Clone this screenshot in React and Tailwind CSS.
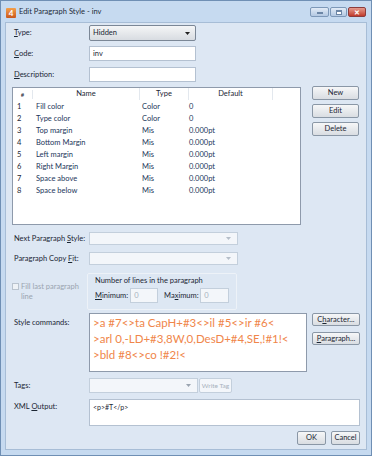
import React from 'react';

const font = { fontFamily: 'Lato, Roboto, "Open Sans", sans-serif' };

const rows = [
  ['1', 'Fill color', 'Color', '0'],
  ['2', 'Type color', 'Color', '0'],
  ['3', 'Top margin', 'Mis', '0.000pt'],
  ['4', 'Bottom Margin', 'Mis', '0.000pt'],
  ['5', 'Left margin', 'Mis', '0.000pt'],
  ['6', 'Right Margin', 'Mis', '0.000pt'],
  ['7', 'Space above', 'Mis', '0.000pt'],
  ['8', 'Space below', 'Mis', '0.000pt'],
];

const Btn = ({ children, className = '' }) => (
  <div
    className={`flex items-center justify-center whitespace-nowrap rounded-[2px] border border-[#8a97a6] bg-gradient-to-b from-[#f6f7f8] to-[#d9dde2] text-[7.5px] text-[#1b2633] ${className}`}
  >
    {children}
  </div>
);

const Arrow = ({ color = '#222' }) => (
  <svg width="5" height="3" viewBox="0 0 5 3">
    <path d="M0 0h5L2.5 3z" fill={color} />
  </svg>
);

const Label = ({ children, className = '' }) => (
  <div className={`w-[75px] shrink-0 whitespace-nowrap text-[7.5px] text-[#1b2633] ${className}`}>{children}</div>
);

export default function App() {
  return (
    <div className="w-[372px] h-[456px] bg-[#c6daf0] border border-[#6f8fb4] flex flex-col" style={font}>
      {/* title bar */}
      <div className="h-[21px] flex items-center px-[5px] shrink-0">
        <div className="w-[10px] h-[10px] bg-gradient-to-b from-[#f3a04b] to-[#c9561b] rounded-[1px] flex items-center justify-center text-[8px] font-bold text-white leading-none mt-[2px]">
          4
        </div>
        <div className="ml-[3px] whitespace-nowrap text-[7.5px] text-[#1d2a38] mt-[1px]">Edit Paragraph Style - inv</div>
        <div className="ml-auto flex self-start mt-[6px] gap-[1px]">
          <div className="w-[19px] h-[10px] rounded-[2px] border border-[#7d98b8] bg-gradient-to-b from-[#e2ebf6] to-[#b3c8e2] flex items-end justify-center pb-[2px]">
            <div className="w-[6px] h-[2px] bg-white border border-[#6c86a6]"></div>
          </div>
          <div className="w-[17px] h-[10px] rounded-[2px] border border-[#7d98b8] bg-gradient-to-b from-[#e2ebf6] to-[#b3c8e2] flex items-center justify-center">
            <div className="w-[6px] h-[5px] border border-[#6c86a6] border-t-2 bg-white"></div>
          </div>
          <div className="w-[18px] h-[10px] rounded-[2px] border border-[#8c3c3c] bg-gradient-to-b from-[#e49a8e] to-[#c0392b] flex items-center justify-center text-white text-[7px] font-bold leading-none">
            ✕
          </div>
        </div>
      </div>

      {/* content */}
      <div className="mx-[4px] mb-[5px] flex-1 bg-[#dde7f3] flex flex-col pl-[8px] pr-[6px] pt-[2px] border border-[#a7bdd6]">
        {/* Type */}
        <div className="flex items-center h-[16px]">
          <Label><u>T</u>ype:</Label>
          <div className="w-[107px] h-[16px] rounded-[2px] border border-[#7b8796] bg-gradient-to-b from-[#f5f6f7] to-[#d8dce1] flex items-center pl-[3px] pr-[5px] text-[7.5px] text-[#1b2633]">
            Hidden
            <div className="ml-auto"><Arrow /></div>
          </div>
        </div>
        {/* Code */}
        <div className="flex items-center h-[15px] mt-[5px]">
          <Label><u>C</u>ode:</Label>
          <div className="w-[107px] h-[15px] border border-[#b4c1d1] bg-white flex items-center pl-[3px] text-[7.5px] text-[#1b2633]">inv</div>
        </div>
        {/* Description */}
        <div className="flex items-center h-[15px] mt-[6px]">
          <Label><u>D</u>escription:</Label>
          <div className="w-[107px] h-[15px] border border-[#b4c1d1] bg-white"></div>
        </div>

        {/* table + buttons */}
        <div className="flex mt-[4px]">
          <div className="ml-[-2px] mt-[1px] w-[289px] h-[138px] border border-[#8e9aab] bg-white text-[7.5px] text-[#22365a]">
            <div className="flex h-[12px] items-center text-[#1b2633]">
              <div className="w-[20px] text-center border-r border-[#e3e8ee] text-[6px]">#</div>
              <div className="w-[107px] text-center border-r border-[#e3e8ee]">Name</div>
              <div className="w-[49px] text-center border-r border-[#e3e8ee]">Type</div>
              <div className="w-[84px] text-center border-r border-[#e3e8ee]">Default</div>
            </div>
            <div className="mt-[1px]">
              {rows.map((r) => (
                <div key={r[0]} className="flex h-[12px] items-center whitespace-nowrap">
                  <div className="w-[20px] pl-[4px] text-[#1b2633]">{r[0]}</div>
                  <div className="w-[107px] pl-[3px]">{r[1]}</div>
                  <div className="w-[49px] pl-[2px]">{r[2]}</div>
                  <div className="w-[84px]">{r[3]}</div>
                </div>
              ))}
            </div>
          </div>
          <div className="ml-[11px] flex flex-col gap-[4px]">
            <Btn className="w-[47px] h-[14px]">New</Btn>
            <Btn className="w-[47px] h-[14px]">Edit</Btn>
            <Btn className="w-[47px] h-[14px]">Delete</Btn>
          </div>
        </div>

        {/* Next paragraph style */}
        <div className="flex items-center h-[13px] mt-[7px]">
          <Label>Next Paragraph <u>S</u>tyle:</Label>
          <div className="w-[149px] h-[13px] border border-[#c3cfdc] bg-[#f3f6fa] flex items-center justify-end pr-[6px]">
            <Arrow color="#b5bec9" />
          </div>
        </div>
        <div className="flex items-center h-[13px] mt-[7px]">
          <Label>Paragraph Copy <u>F</u>it:</Label>
          <div className="w-[149px] h-[13px] border border-[#c3cfdc] bg-[#f3f6fa] flex items-center justify-end pr-[6px]">
            <Arrow color="#b5bec9" />
          </div>
        </div>

        {/* group */}
        <div className="flex mt-[8px] h-[37px]">
          <div className="w-[75px] flex text-[7.5px] text-[#9aa4b0] pt-[9px] ml-[-2px]">
            <div className="w-[7px] h-[7px] border border-[#b9c3ce] bg-[#eef2f6] mt-[1px] shrink-0"></div>
            <div className="ml-[2px] leading-[10px] whitespace-nowrap">Fill last paragraph<br />line</div>
          </div>
          <div className="w-[150px] border border-[#edf2f8] rounded-[2px] px-[7px] text-[7.5px] text-[#1b2633] whitespace-nowrap">
            <div className="mt-[1px]">Number of lines in the paragraph</div>
            <div className="flex items-center mt-[2px]">
              <div className="w-[37px]"><u>M</u>inimum:</div>
              <div className="w-[29px] h-[15px] border border-[#c3cfdc] bg-[#f3f6fa] text-[#a7b1bc] pl-[3px] flex items-center">0</div>
              <div className="ml-[6px] w-[38px]">Ma<u>x</u>imum:</div>
              <div className="w-[30px] h-[15px] border border-[#c3cfdc] bg-[#f3f6fa] text-[#a7b1bc] pl-[3px] flex items-center">0</div>
            </div>
          </div>
        </div>

        {/* style commands */}
        <div className="flex mt-[3px]">
          <Label className="pt-[4px]">Style commands:</Label>
          <div className="w-[219px] h-[59px] border border-[#8e9aab] bg-white px-[3px] pt-[1px] text-[11.5px] leading-[16px] text-[#f0864a] whitespace-nowrap">
            &gt;a #7&lt;&gt;ta CapH+#3&lt;&gt;il #5&lt;&gt;ir #6&lt;
            <br />
            &gt;arl 0,-LD+#3,8W,0,DesD+#4,SE,!#1!&lt;
            <br />
            &gt;bld #8&lt;&gt;co !#2!&lt;
          </div>
          <div className="ml-[5px] flex flex-col gap-[6px]">
            <Btn className="w-[48px] h-[13px]">C<u>h</u>aracter...</Btn>
            <Btn className="w-[48px] h-[13px]"><u>P</u>aragraph...</Btn>
          </div>
        </div>

        {/* tags */}
        <div className="flex items-center h-[15px] mt-[6px]">
          <Label>Tags:</Label>
          <div className="w-[109px] h-[15px] border border-[#c3cfdc] bg-[#f3f6fa] flex items-center justify-end pr-[6px]">
            <Arrow color="#9aa4b0" />
          </div>
          <div className="ml-[1px] w-[33px] h-[15px] border border-[#c3cfdc] bg-[#f3f6fa] rounded-[2px] flex items-center justify-center whitespace-nowrap text-[6.5px] text-[#a7b1bc]">
            Write Tag
          </div>
        </div>

        {/* xml */}
        <div className="flex mt-[6px]">
          <Label className="pt-[2px]">XML <u>O</u>utput:</Label>
          <div className="w-[271px] h-[27px] border border-[#b4c1d1] bg-white pl-[3px] pt-[2px] text-[7px] text-[#1b2633]">
            &lt;p&gt;#T&lt;/p&gt;
          </div>
        </div>

        {/* ok/cancel */}
        <div className="flex justify-end gap-[5px] mt-[5px]">
          <Btn className="w-[29px] h-[14px]">OK</Btn>
          <Btn className="w-[29px] h-[14px]">Cancel</Btn>
        </div>
      </div>
    </div>
  );
}
